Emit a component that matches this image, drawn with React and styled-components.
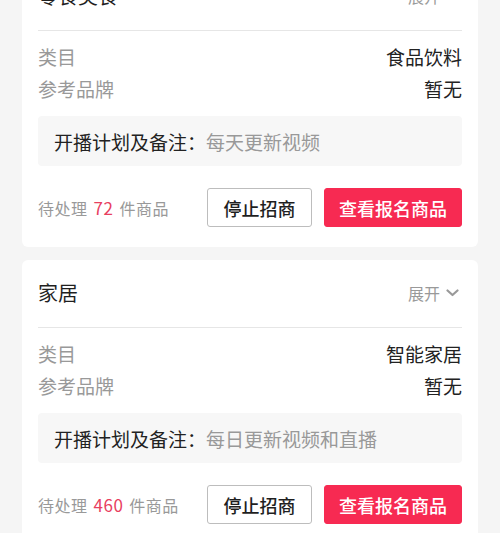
import React from "react";
import styled, { createGlobalStyle } from "styled-components";

const Global = createGlobalStyle`
  html, body { margin: 0; padding: 0; background: #f5f5f5; }
  body { font-family: "Noto Sans CJK SC", "Noto Sans", sans-serif; -webkit-font-smoothing: antialiased; }
  * { box-sizing: border-box; }
`;

const List = styled.div`
  display: flex;
  flex-direction: column;
  gap: 13px;
  padding: 0 22px;
  margin-top: -37px;
  height: 570px;
  overflow: hidden;
`;

const Card = styled.section`
  background: #fff;
  border-radius: 6px;
  padding: 0 16px 20px;
  display: flex;
  flex-direction: column;
`;

const Header = styled.div`
  height: 68px;
  display: flex;
  align-items: center;
  justify-content: space-between;
  border-bottom: 1px solid #e6e6e6;
  padding-bottom: 2px;
`;

const Title = styled.h2`
  margin: 0;
  font-size: 20px;
  font-weight: 400;
  color: #1f1f1f;
`;

const Toggle = styled.button`
  border: 0;
  background: none;
  padding: 0;
  font: inherit;
  font-size: 16px;
  color: #999;
  display: flex;
  align-items: center;
  gap: 6px;
  margin-right: 3px;
`;

const Info = styled.div`
  padding-top: 9px;
  display: flex;
  flex-direction: column;
`;

const Row = styled.div`
  display: flex;
  justify-content: space-between;
  align-items: center;
  height: 32px;
  font-size: 19px;
`;

const Label = styled.span`
  color: #999;
`;

const Value = styled.span`
  color: #222;
`;

const Notes = styled.div`
  margin-top: 12px;
  height: 50px;
  background: #f7f7f7;
  border-radius: 4px;
  padding: 0 16px;
  display: flex;
  align-items: center;
  font-size: 19px;
`;

const NoteLabel = styled.span`
  color: #222;
`;

const NoteValue = styled.span`
  color: #999;
`;

const Footer = styled.div`
  margin-top: 22px;
  display: flex;
  align-items: center;
`;

const Pending = styled.div`
  flex: 1;
  font-size: 16px;
  color: #999;
  letter-spacing: 0.5px;
`;

const Count = styled.span`
  color: #e8405f;
  margin: 0 6px;
  font-size: 17px;
`;

const Button = styled.button`
  height: 39px;
  border-radius: 3px;
  font: inherit;
  font-size: 18px;
  font-weight: 500;
  display: flex;
  align-items: center;
  justify-content: center;
  width: ${(p) => (p.$primary ? "138px" : "105px")};
  margin-left: ${(p) => (p.$primary ? "12px" : "0")};
  border: 1px solid ${(p) => (p.$primary ? "#f72a52" : "#bdbdbd")};
  background: ${(p) => (p.$primary ? "#f72a52" : "#fff")};
  color: ${(p) => (p.$primary ? "#fff" : "#1f1f1f")};
`;

const Chevron = () => (
  <svg width="13" height="13" viewBox="0 0 13 13" fill="none">
    <path d="M1.5 4.5l5 4.5 5-4.5" stroke="#999" strokeWidth="2.2" strokeLinecap="round" strokeLinejoin="round" />
  </svg>
);

const data = [
  { title: "零食美食", category: "食品饮料", brand: "暂无", notes: "每天更新视频", count: 72 },
  { title: "家居", category: "智能家居", brand: "暂无", notes: "每日更新视频和直播", count: 460 },
];

export default function App() {
  return (
    <>
      <Global />
      <List>
        {data.map((d) => (
          <Card key={d.title}>
            <Header>
              <Title>{d.title}</Title>
              <Toggle>
                展开
                <Chevron />
              </Toggle>
            </Header>
            <Info>
              <Row>
                <Label>类目</Label>
                <Value>{d.category}</Value>
              </Row>
              <Row>
                <Label>参考品牌</Label>
                <Value>{d.brand}</Value>
              </Row>
            </Info>
            <Notes>
              <NoteLabel>开播计划及备注：</NoteLabel>
              <NoteValue>{d.notes}</NoteValue>
            </Notes>
            <Footer>
              <Pending>
                待处理<Count>{d.count}</Count>件商品
              </Pending>
              <Button>停止招商</Button>
              <Button $primary>查看报名商品</Button>
            </Footer>
          </Card>
        ))}
      </List>
    </>
  );
}
